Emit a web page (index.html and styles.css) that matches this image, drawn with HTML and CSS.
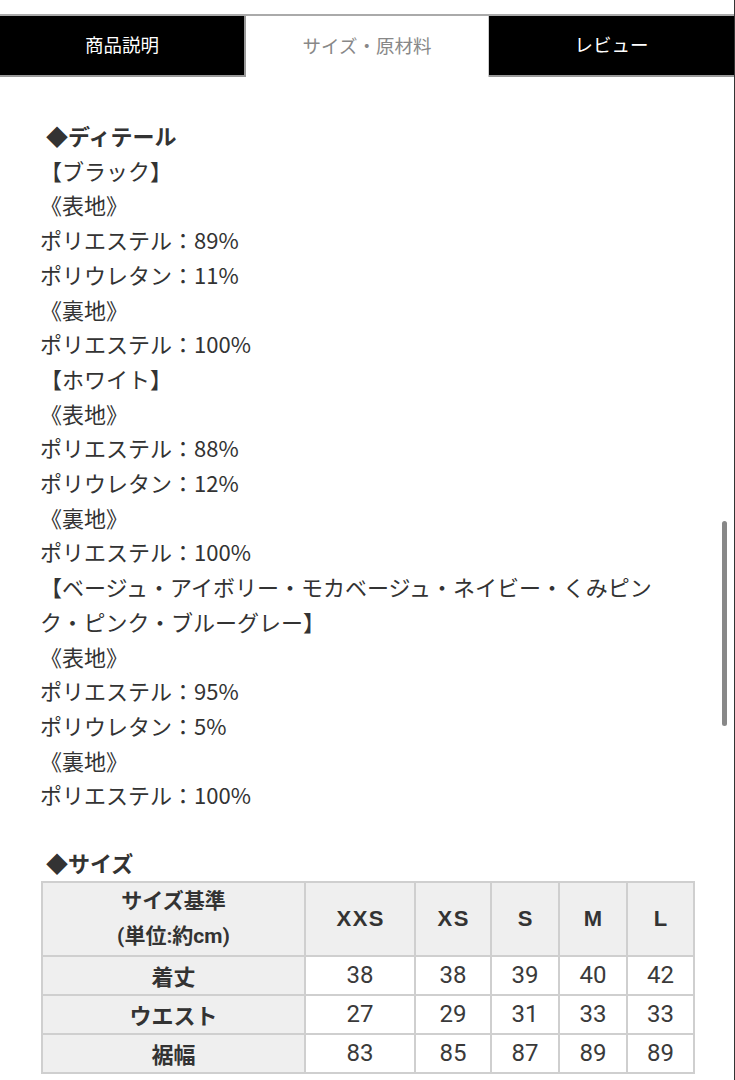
FILE: index.html
```html
<!DOCTYPE html>
<html lang="ja">
<head>
<meta charset="utf-8">
<link rel="stylesheet" href="styles.css">
</head>
<body>
<div class="page">
  <nav class="tabs">
    <div class="tab tab-dark tab-first">商品説明</div>
    <div class="tab tab-active">サイズ・原材料</div>
    <div class="tab tab-dark tab-last">レビュー</div>
  </nav>
  <div class="content">
    <div class="detail">
      <div class="heading">◆ディテール</div>
      <div>【ブラック】</div>
      <div>《表地》</div>
      <div>ポリエステル：89%</div>
      <div>ポリウレタン：11%</div>
      <div>《裏地》</div>
      <div>ポリエステル：100%</div>
      <div>【ホワイト】</div>
      <div>《表地》</div>
      <div>ポリエステル：88%</div>
      <div>ポリウレタン：12%</div>
      <div>《裏地》</div>
      <div>ポリエステル：100%</div>
      <div>【ベージュ・アイボリー・モカベージュ・ネイビー・くみピンク・ピンク・ブルーグレー】</div>
      <div>《表地》</div>
      <div>ポリエステル：95%</div>
      <div>ポリウレタン：5%</div>
      <div>《裏地》</div>
      <div>ポリエステル：100%</div>
    </div>
    <div class="heading size-heading">◆サイズ</div>
    <table class="size-table">
      <colgroup>
        <col class="c1"><col class="c2"><col class="c3"><col class="c4"><col class="c5"><col class="c6">
      </colgroup>
      <thead>
        <tr>
          <th class="label">サイズ基準<br>(単位:約cm)</th>
          <th class="sz">XXS</th>
          <th class="sz">XS</th>
          <th class="sz">S</th>
          <th class="sz">M</th>
          <th class="sz">L</th>
        </tr>
      </thead>
      <tbody>
        <tr><th>着丈</th><td>38</td><td>38</td><td>39</td><td>40</td><td>42</td></tr>
        <tr><th>ウエスト</th><td>27</td><td>29</td><td>31</td><td>33</td><td>33</td></tr>
        <tr><th>裾幅</th><td>83</td><td>85</td><td>87</td><td>89</td><td>89</td></tr>
      </tbody>
    </table>
  </div>
  <div class="scrollbar"></div>
</div>
</body>
</html>
```
FILE: styles.css
```css
html, body {
  margin: 0;
  padding: 0;
  background: #fff;
}
body {
  font-family: "Noto Sans CJK JP", "Noto Sans", sans-serif;
  color: #333;
  text-spacing-trim: space-all;
}
.page {
  position: relative;
  width: 734px;
  height: 1080px;
  border-right: 1px solid #333;
  overflow: hidden;
}
.tabs {
  display: flex;
  margin-top: 14px;
  height: 63px;
  border-top: 2px solid #aaa;
  box-sizing: border-box;
}
.tab {
  flex: 0 0 auto;
  display: flex;
  align-items: center;
  justify-content: center;
  font-size: 18.5px;
  padding-bottom: 4px;
  box-sizing: border-box;
}
.tab-dark {
  background: #000;
  color: #fff;
  border-bottom: 2px solid #999;
}
.tab-first {
  width: 246px;
  border-right: 2px solid #999;
}
.tab-active {
  width: 243px;
  background: #fff;
  color: #888;
  border-right: 1px solid #ccc;
}
.tab-last {
  flex: 1 1 auto;
}
.content {
  padding: 41px 0 0 40px;
}
.detail {
  width: 630px;
  font-size: 22px;
  line-height: 34.7px;
}
.heading {
  font-weight: bold;
  font-size: 22px;
  line-height: 34.7px;
  padding-left: 6px;
}
.size-heading {
  margin-top: 33px;
  padding-left: 6px;
}
.size-table {
  margin-top: 1px;
  margin-left: 1px;
  border-collapse: collapse;
  table-layout: fixed;
  width: 652px;
  font-family: Roboto, "Noto Sans CJK JP", sans-serif;
  color: #333;
}
.size-table th,
.size-table td {
  border: 2px solid #cfcfcf;
  text-align: center;
  padding: 0;
}
.size-table thead th {
  background: #efefef;
  height: 72px;
  font-weight: bold;
  line-height: 35px;
}
.size-table thead th.label {
  font-size: 21px;
}
.size-table thead th.sz {
  font-family: "Liberation Sans", Arial, sans-serif;
  font-size: 22px;
  letter-spacing: 1.5px;
  padding-left: 1.5px;
}
.size-table tbody th {
  background: #efefef;
  font-size: 22px;
  font-weight: bold;
  height: 37px;
}
.size-table tbody td {
  font-size: 24px;
  height: 37px;
  background: #fff;
  color: #3a3a3a;
}
.c1 { width: 263px; }
.c2 { width: 110px; }
.c3 { width: 76px; }
.c4 { width: 68px; }
.c5 { width: 68px; }
.c6 { width: 67px; }
.scrollbar {
  position: absolute;
  right: 7px;
  top: 521px;
  width: 5px;
  height: 205px;
  background: #888;
  border-radius: 3px;
}
```
